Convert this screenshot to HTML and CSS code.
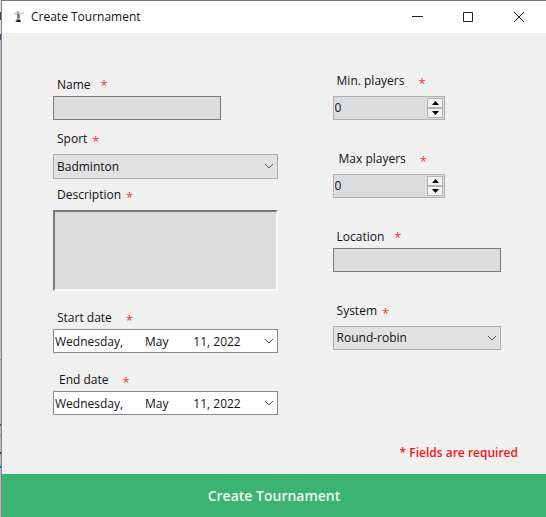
FILE: index.html
```html
<!DOCTYPE html>
<html lang="en">
<head>
<meta charset="utf-8">
<meta name="viewport" content="width=device-width, initial-scale=1">
<title>Create Tournament</title>
<link rel="stylesheet" href="styles.css">
</head>
<body>
<div class="desktop-edge"></div>
<main class="window">
  <header class="titlebar">
    <svg class="app-icon" viewBox="0 0 12 14" aria-hidden="true">
      <path d="M1 3l3 1.500M7 4l4-1" stroke="#aaa" fill="none"/>
      <circle cx="5" cy="2.500" r="1.500" fill="#aaa"/>
      <path d="M4 4l3 .500-.500 4-2 .500z" fill="#666"/>
      <path d="M5 8l-3 3.500" stroke="#aaa" fill="none"/>
      <path d="M4 9.500h3l1 2.500H3z" fill="#222"/>
    </svg>
    <h1>Create Tournament</h1>
    <div class="window-buttons">
      <button type="button" aria-label="Minimize"><svg viewBox="0 0 12 12"><path d="M1 5.500h11"/></svg></button>
      <button type="button" aria-label="Maximize"><svg viewBox="0 0 12 12"><path d="M1.500 1.500h9v9h-9z"/></svg></button>
      <button type="button" aria-label="Close"><svg viewBox="0 0 12 12"><path d="M1 1l10 10M11 1L1 11"/></svg></button>
    </div>
  </header>
  <form class="form">
    <div class="columns">
      <div class="column column-main">
        <div class="field name">
          <div class="caption mid raised"><label for="name">Name</label><span class="star">*</span></div>
          <input class="box" id="name" type="text">
        </div>
        <div class="field roomy sport">
          <div class="caption"><label for="sport">Sport</label><span class="star">*</span></div>
          <div class="picker">
            <select class="box" id="sport"><option>Badminton</option></select>
            <svg class="chevron" viewBox="0 0 10 6"><path d="M1 1l4 4 4-4"/></svg>
          </div>
        </div>
        <div class="field roomy description">
          <div class="caption"><label for="description">Description</label><span class="star">*</span></div>
          <textarea id="description"></textarea>
        </div>
        <div class="field date">
          <div class="caption far"><label for="start">Start date</label><span class="star">*</span></div>
          <div class="picker">
            <input class="box" id="start" type="text" value="Wednesday,       May        11, 2022">
            <svg class="chevron" viewBox="0 0 10 6"><path d="M1 1l4 4 4-4"/></svg>
          </div>
        </div>
        <div class="field date">
          <div class="caption far indented"><label for="end">End date</label><span class="star">*</span></div>
          <div class="picker">
            <input class="box" id="end" type="text" value="Wednesday,       May        11, 2022">
            <svg class="chevron" viewBox="0 0 10 6"><path d="M1 1l4 4 4-4"/></svg>
          </div>
        </div>
      </div>
      <div class="column column-side">
        <div class="field roomy">
          <div class="caption far"><label for="min">Min. players</label><span class="star">*</span></div>
          <div class="number">
            <input id="min" type="number" value="0">
            <div class="steps">
              <button type="button" aria-label="Increase minimum"><svg viewBox="0 0 7 4"><path d="M0 4l3.500-4L7 4z"/></svg></button>
              <button type="button" aria-label="Decrease minimum"><svg viewBox="0 0 7 4"><path d="M0 0l3.500 4L7 0z"/></svg></button>
            </div>
          </div>
        </div>
        <div class="field roomy">
          <div class="caption far indented"><label for="max">Max players</label><span class="star">*</span></div>
          <div class="number">
            <input id="max" type="number" value="0">
            <div class="steps">
              <button type="button" aria-label="Increase maximum"><svg viewBox="0 0 7 4"><path d="M0 4l3.500-4L7 4z"/></svg></button>
              <button type="button" aria-label="Decrease maximum"><svg viewBox="0 0 7 4"><path d="M0 0l3.500 4L7 0z"/></svg></button>
            </div>
          </div>
        </div>
        <div class="field">
          <div class="caption mid raised"><label for="location">Location</label><span class="star">*</span></div>
          <input class="box" id="location" type="text">
        </div>
        <div class="field roomy">
          <div class="caption"><label for="system">System</label><span class="star">*</span></div>
          <div class="picker">
            <select class="box" id="system"><option>Round-robin</option></select>
            <svg class="chevron" viewBox="0 0 10 6"><path d="M1 1l4 4 4-4"/></svg>
          </div>
        </div>
      </div>
    </div>
    <p class="note">* Fields are required</p>
    <button class="submit" type="submit">Create Tournament</button>
  </form>
</main>
</body>
</html>
```
FILE: styles.css
```css
* {
  box-sizing: border-box;
}

body {
  margin: 0;
  min-height: 100vh;
  display: flex;
  font: 12px/20px "Open Sans", "Noto Sans", sans-serif;
  color: #111;
  background: #f0f0f0;
}

input,
select,
textarea,
button {
  font: inherit;
  color: inherit;
  margin: 0;
  border-radius: 0;
}

/* Sliver of the window behind this one */
.desktop-edge {
  flex: none;
  width: 1px;
  background: linear-gradient(#ddd 12px, #444 12px 20px, #ddd 20px 34px, #358 34px 40px, #c4c4c8 40px 359px, #888 359px 360px, #bbb 360px 424px, #06b 424px 426px, #bbb 426px 434px, #a98 434px 437px, #bbb 437px 452px, #333 452px 454px, #bbb 454px 466px, #06b 466px 468px, #bbb 468px);
}

.window {
  flex: 1;
  min-width: 0;
  display: flex;
  flex-direction: column;
  border-top: 1px solid #777;
  border-left: 1px solid #858585;
}

.titlebar {
  display: flex;
  align-items: center;
  height: 32px;
  padding: 0 2px 0 11px;
  background: #fff;
}

.app-icon {
  width: 12px;
  height: 14px;
  margin-right: 6px;
}

h1 {
  flex: 1;
  margin: 0;
  font-size: 12px;
  font-weight: 400;
}

.window-buttons {
  display: flex;
}

.window-buttons button {
  width: 51px;
  height: 32px;
  padding: 0;
  border: 0;
  background: none;
}

.window-buttons svg {
  display: block;
  width: 12px;
  height: 12px;
  margin: 0 auto;
  fill: none;
  stroke: #222;
}

.form {
  flex: 1;
  display: flex;
  flex-direction: column;
}

.columns {
  display: grid;
  grid-template-columns: minmax(0, 4fr) minmax(0, 3fr);
  gap: 55px;
  padding: 38px 45px 0 51px;
}

.column {
  display: flex;
  flex-direction: column;
}

.column-main {
  padding-top: 4px;
}

.column-side {
  gap: 29px;
}

.field {
  display: flex;
  flex-direction: column;
  gap: 1px;
}

.roomy {
  gap: 5px;
}

.sport {
  margin-top: 9px;
}

.description {
  margin-top: 6px;
}

.date {
  margin-top: 17px;
}

.caption {
  display: flex;
  gap: 5px;
  height: 20px;
  padding-left: 4px;
}

.mid {
  gap: 10px;
}

.far {
  gap: 14px;
}

.indented {
  padding-left: 6px;
}

.star {
  padding-top: 2px;
  font-size: 13px;
  color: #ff3030;
}

.raised .star {
  padding-top: 0;
}

.box {
  display: block;
  width: 100%;
  height: 24px;
  padding: 0 3px;
  border: 1px solid #7a7a7a;
  background: #dcdcdc;
}

.name .box {
  width: 75%;
}

.picker {
  position: relative;
}

.date .box {
  padding: 0 1px;
  border-color: #8a8a8a;
  background: #fff;
}

select.box {
  appearance: none;
  border-color: #adadad;
  background: #e1e1e1;
}

.sport .box {
  height: 25px;
}

.chevron {
  position: absolute;
  right: 4px;
  top: 9px;
  width: 10px;
  height: 6px;
  fill: none;
  stroke: #555;
  pointer-events: none;
}

textarea {
  display: block;
  width: 100%;
  height: 81px;
  padding: 2px;
  resize: none;
  border: 2px solid;
  border-color: #7a7a7a #fafafa #fafafa #7a7a7a;
  background: #dcdcdc;
}

.number {
  display: flex;
  width: 67%;
  height: 24px;
  padding: 1px;
  border: 1px solid #b0b0b4;
  background: #dcdcdc;
}

.number input {
  flex: 1;
  min-width: 0;
  padding: 0;
  border: 0;
  background: none;
  appearance: textfield;
}

.number input::-webkit-inner-spin-button {
  appearance: none;
}

.steps {
  display: grid;
  width: 16px;
}

.steps button {
  display: grid;
  place-items: center;
  padding: 0;
  border: 1px solid #b4b4b4;
  background: #f2f2f2;
}

.steps svg {
  width: 7px;
  height: 4px;
}

.note {
  margin: auto 28px 11px;
  font-weight: 600;
  text-align: right;
  color: #f51414;
}

.submit {
  height: 43px;
  border: 0;
  background: #3cb371;
  color: #f0f8f2;
  font-size: 14px;
  font-weight: 600;
}
```
